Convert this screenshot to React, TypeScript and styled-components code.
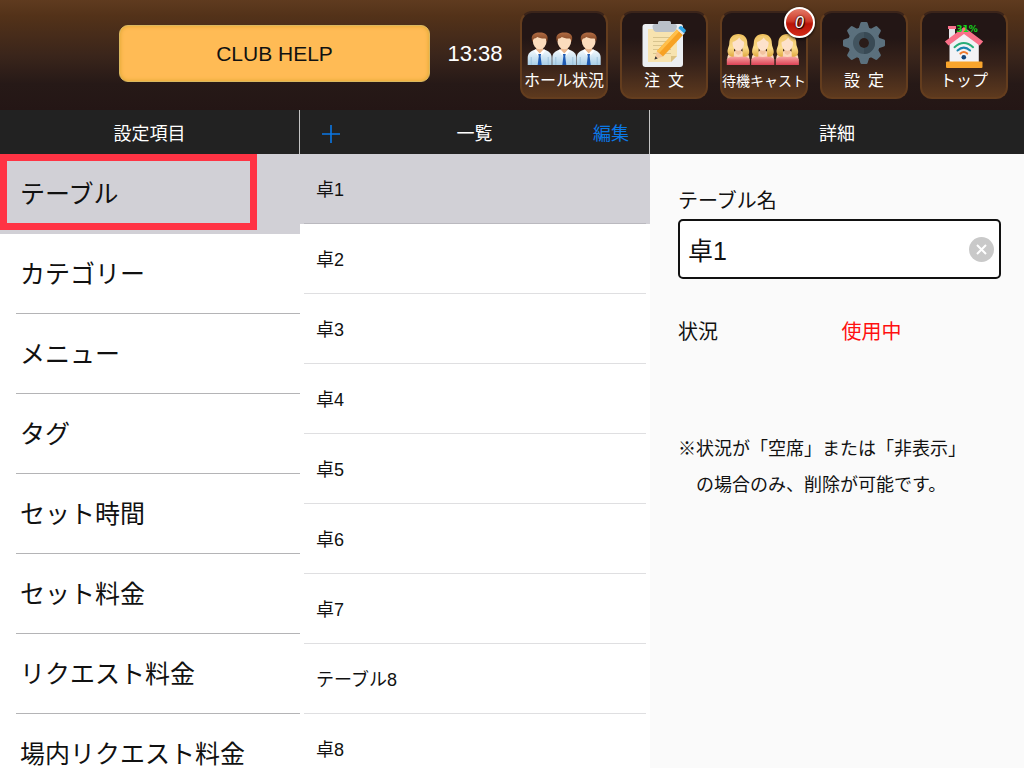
import React, { useState } from "react";
import styled, { createGlobalStyle, css } from "styled-components";

const GlobalStyle = createGlobalStyle`
  *, *::before, *::after { box-sizing: border-box; }
  html, body { margin: 0; }
  body {
    background: #fff;
    color: #111;
    font-family: "Liberation Sans", "Noto Sans CJK JP", sans-serif;
    font-size: 18px;
  }
  button, input { font: inherit; color: inherit; }
  button { margin: 0; padding: 0; border: 0; background: none; cursor: pointer; }
  h1, h2, p, ul, dl, dd { margin: 0; padding: 0; font-weight: 400; }
  ul { list-style: none; }
`;

const Page = styled.div`
  display: flex;
  flex-direction: column;
  height: 100vh;
  overflow: hidden;
`;

const Header = styled.header`
  flex: none;
  display: flex;
  align-items: flex-start;
  gap: 16px;
  height: 110px;
  padding: 11px 16px 0 119px;
  background: linear-gradient(#5f3b1f 0, #533219 16px, #3a251b 56px, #261917 84px, #241615 110px);
`;

const Brand = styled.button`
  flex: 1;
  min-width: 0;
  height: 57px;
  margin-top: 14px;
  border: 1px solid #d9b860;
  border-radius: 9px;
  background: #ffbb55;
  box-shadow: inset 0 0 4px #dba52c;
  color: #111;
  font-size: 21px;
`;

const Clock = styled.time`
  width: 58px;
  margin-top: 14px;
  color: #fff;
  font-size: 22px;
  line-height: 57px;
  text-align: center;
  white-space: nowrap;
`;

const Nav = styled.nav`
  display: flex;
  gap: 12px;
`;

const Tile = styled.button`
  position: relative;
  display: flex;
  flex-direction: column;
  align-items: center;
  width: 88px;
  height: 88px;
  border: 2px solid #643d1e;
  border-top-color: #3b241a;
  border-radius: 12px;
  background: linear-gradient(#231615 30%, #38231a 62%, #5d391e);
  color: #fff;
`;

const TileLabel = styled.span<{ $small?: boolean }>`
  font-size: ${(p) => (p.$small ? 14 : 16)}px;
  line-height: 24px;
  white-space: nowrap;
`;

const TileArt = styled.svg`
  display: block;
  flex: none;
  width: 84px;
  height: 56px;
`;

const Badge = styled.span`
  position: absolute;
  top: -6px;
  right: -9px;
  width: 31px;
  height: 31px;
  border: 2px solid #fff;
  border-radius: 50%;
  background: linear-gradient(#e37a68, #cf3a28 45%, #b81408 55%, #d42c18);
  box-shadow: 0 1px 3px #000;
  color: #fff;
  font-size: 16px;
  font-style: italic;
  line-height: 27px;
  text-align: center;
  text-shadow: 0 0 2px #000, 1px 1px 1px #000;
`;

const Panels = styled.main`
  flex: 1;
  min-height: 0;
  display: grid;
  grid-template-columns: 300px 350px minmax(0, 1fr);
`;

const Panel = styled.section<{ $shaded?: boolean }>`
  min-width: 0;
  min-height: 0;
  display: flex;
  flex-direction: column;
  background: ${(p) => (p.$shaded ? "#fafafa" : "#fff")};
`;

const PanelBar = styled.div<{ $divided?: boolean }>`
  flex: none;
  display: grid;
  grid-template-columns: 1fr auto 1fr;
  align-items: center;
  height: 44px;
  padding: 4px 20px 0;
  background: #222;
  color: #fff;
  border-right: ${(p) => (p.$divided ? "1px solid #c4c4c4" : "0")};
`;

const PanelTitle = styled.h2`
  grid-column: 2;
  font-size: 18px;
  line-height: 40px;
`;

const BarButton = styled.button<{ $end?: boolean }>`
  display: flex;
  align-items: center;
  justify-self: ${(p) => (p.$end ? "end" : "start")};
  height: 40px;
  line-height: 40px;
  color: #0b78e6;
`;

const Scroll = styled.ul`
  flex: 1;
  min-height: 0;
  overflow-y: auto;
  scrollbar-width: none;
`;

const MenuRow = styled.button<{ $active: boolean }>`
  position: relative;
  display: block;
  width: 100%;
  height: 80px;
  padding-left: 20px;
  font-size: 25px;
  line-height: 80px;
  text-align: left;
  white-space: nowrap;
  background: ${(p) => (p.$active ? "#d1d0d6" : "#fff")};

  ${(p) =>
    !p.$active &&
    css`
      &::after {
        content: "";
        position: absolute;
        inset: auto 0 0 16px;
        height: 1px;
        background: #b4b4b6;
      }
    `}
`;

const Highlight = styled.span`
  position: absolute;
  inset: 0 43px 4px 0;
  border: 7px solid #ff3344;
`;

const ListRow = styled.button<{ $active: boolean }>`
  display: block;
  width: 100%;
  height: 70px;
  padding: 0 4px;
  text-align: left;
  background: ${(p) => (p.$active ? "#d1d0d6" : "#fff")};
`;

const ListText = styled.span<{ $active: boolean }>`
  display: block;
  height: 70px;
  padding-left: 12px;
  border-bottom: 1px solid ${(p) => (p.$active ? "#bab9bf" : "#dfdfe1")};
  line-height: 72px;
`;

const Form = styled.form`
  display: flex;
  flex-direction: column;
  padding: 32px 23px 0 28px;
  font-size: 20px;
  line-height: 30px;
`;

const Field = styled.div`
  display: flex;
  align-items: center;
  height: 60px;
  margin-top: 3px;
  padding: 0 5px 0 8px;
  border: 2px solid #111;
  border-radius: 5px;
  background: #fff;
`;

const TextInput = styled.input`
  flex: 1;
  min-width: 0;
  height: 56px;
  padding: 0;
  border: 0;
  outline: 0;
  background: transparent;
  font-size: 25px;
`;

const ClearButton = styled.button`
  flex: none;
  display: flex;
  width: 25px;
  height: 25px;
  border-radius: 50%;
  background: #c9c9c9;
`;

const Status = styled.dl`
  display: grid;
  grid-template-columns: 1fr 1fr;
  column-gap: 4px;
  margin-top: 38px;
  color: #111;

  dd { color: #ff1010; }
`;

const Note = styled.p`
  margin-top: 84px;
  padding-left: 18px;
  text-indent: -18px;
  font-size: 18px;
  line-height: 36px;
  white-space: nowrap;
`;

function HallIcon() {
  return (
    <TileArt viewBox="0 0 84 56" aria-hidden="true">
      <defs>
        <linearGradient id="shirt" x2="0" y2="1">
          <stop stopColor="#f6fbfe" />
          <stop offset="1" stopColor="#a9cfe8" />
        </linearGradient>
        <linearGradient id="brownHair" x2="0" y2="1">
          <stop stopColor="#b06b42" />
          <stop offset="1" stopColor="#7d4322" />
        </linearGradient>
        <g id="man">
          <path d="M-12 52v-7c0-5 3-7 8-8.500h8c5 1.500 8 3.500 8 8.500v7z" fill="url(#shirt)" />
          <path d="M-3.500 33h7v4L0 41l-3.500-4z" fill="#e9b68e" />
          <path d="M-4.500 36 0 40.500 4.500 36l1 2L2 42.500 0 41l-2 1.500L-5.500 38z" fill="#fff" />
          <path d="M-1.500 41h3l-.6 2L2 52h-4l1.100-9z" fill="#1f5bb4" />
          <path d="M-8.500 44v8M8.500 44v8" stroke="#8fb9d6" strokeWidth=".7" />
          <ellipse cy="28.500" rx="6.800" ry="7.800" fill="#fbdcbd" />
          <path d="M-7.300 29C-9.500 22-6 19.500 0 19.500s9.500 2.500 7.300 9.500L6 25.500c-4 .2-7-.5-8.500-1.500-1 1-2.300 1.500-3.500 1.500z" fill="url(#brownHair)" />
        </g>
      </defs>
      <use href="#man" x="17.700" />
      <use href="#man" x="42.300" />
      <use href="#man" x="66.700" />
    </TileArt>
  );
}

function OrderIcon() {
  return (
    <TileArt viewBox="0 0 84 56" aria-hidden="true">
      <rect x="20.500" y="11" width="40.500" height="43" rx="3" fill="#eceff2" />
      <path d="M26 16h29v27l-6 6H26z" fill="#f7e3af" />
      <path d="M49 49v-6h6z" fill="#dcc283" />
      <path d="M31 24.500h18M31 28.500h16M31 32.500h14M31 36.500h18M31 40.500h18" stroke="#d8c48e" strokeWidth="1" />
      <path d="M36 11V9.500Q36 8 37.500 8h10Q49 8 49 9.500V11h3.500Q55 11 55 13.500 54 19 50 19H35q-4 0-4.500-5.500Q30.500 11 33 11z" fill="#b9c0c9" />
      <path d="m32.500 46.500 2.500-8.500 6 5.500z" fill="#f3c79b" />
      <path d="m32.500 46.500.9-3.200 2.300 2.100z" fill="#333" />
      <path d="m35 38 20-21.500 6 5.500-20 21.500z" fill="#f7a224" />
      <path d="m35 38 20-21.500 2.200 2L37.200 40z" fill="#ffc04c" />
      <path d="m55 16.500 1.800-2 6 5.500-1.800 2z" fill="#dfe6ea" />
      <path d="m56.300 15 1.600-1.700q.9-.8 2 0l3.400 3.200q1 1 .2 2L62 20.200z" fill="#2fa6e6" />
    </TileArt>
  );
}

function CastIcon() {
  return (
    <TileArt viewBox="0 0 84 56" aria-hidden="true">
      <defs>
        <linearGradient id="dress" x2="0" y2="1">
          <stop stopColor="#f7a5a2" />
          <stop offset="1" stopColor="#dc4256" />
        </linearGradient>
        <linearGradient id="blondHair" x2="0" y2="1">
          <stop stopColor="#eebf5c" />
          <stop offset=".6" stopColor="#fbdc8a" />
          <stop offset="1" stopColor="#dfa83f" />
        </linearGradient>
        <g id="woman">
          <path d="M-11 52v-7c0-4 4-6 8-7h6c4 1 8 3 8 7v7z" fill="#fbd8bd" />
          <path d="M0 21c-6 0-9 4-9 9 0 4-2.500 6-1.500 10 .8 3 4 4.500 6 4L-4 34h8l.5 10c3 .5 5.800-1 6.300-4 .7-4-1.800-6-1.800-10 0-5-3-9-9-9z" fill="url(#blondHair)" />
          <path d="M-3 34h6v5q0 2-3 3-3-1-3-3z" fill="#f2c3a0" />
          <ellipse cy="30.500" rx="5.800" ry="7.300" fill="#fde2cb" />
          <path d="M-6.200 29c1-5 3-6 6.200-6s5.200 1 6.200 6C4 28 2 26.500 1 24.500-1 27-3.500 28.500-6.200 29z" fill="#f3cc74" />
          <path d="M-11.500 46q4-3.500 11.500-2 7.500-1.500 11.500 2v6h-23z" fill="url(#dress)" />
        </g>
      </defs>
      <use href="#woman" x="16.300" />
      <use href="#woman" x="40.800" />
      <use href="#woman" x="65.300" />
    </TileArt>
  );
}

const TEETH = [0, 45, 90, 135, 180, 225, 270, 315];

function GearIcon() {
  return (
    <TileArt viewBox="0 0 84 56" aria-hidden="true">
      <g transform="translate(42 30)">
        {TEETH.map((angle) => (
          <path key={angle} d="M-5.500-14-3.600-20q.3-1 1.300-1h4.600q1 0 1.300 1L5.500-14z" fill="#5b707d" transform={`rotate(${angle})`} />
        ))}
        <circle r="16" fill="#5b707d" />
        <circle r="8" fill="none" stroke="#42545f" strokeWidth="6" />
        <path d="M0-11A11 11 0 0 1 0 11V5A5 5 0 0 0 0-5z" fill="#394a55" />
        <circle r="5" fill="#2a1c19" />
      </g>
    </TileArt>
  );
}

function HomeIcon() {
  return (
    <TileArt viewBox="0 0 84 56" role="img" aria-label="31%">
      <path d="M27 15h6v12h-6z" fill="#e8e8ec" />
      <path d="M26 13h8v3h-8z" fill="#f7708a" />
      <path d="M27.500 28 42 17l14.800 11v21H27.500z" fill="#f2f2f5" />
      <path d="m42 14 19.200 14.500-3.600 4L42 21 26.500 32.500l-3.600-4z" fill="#fa7089" />
      <rect x="24" y="48.500" width="36.500" height="6.500" rx="1" fill="#f9a52c" />
      <g fill="none" strokeWidth="2" strokeLinecap="round">
        <path d="M32.500 34.200q9.300-8.300 18.600 0" stroke="#28ad78" />
        <path d="M35.500 37.500q6.300-5.800 12.600 0" stroke="#1b84ad" />
        <path d="M38.400 40.600q3.400-3.200 6.800 0" stroke="#ee7a2d" />
      </g>
      <circle cx="41.800" cy="44.300" r="2.300" fill="#12457c" />
      <text x="45" y="19" textAnchor="middle" fill="#14d41c" fontFamily="DejaVu Sans, sans-serif" fontSize="9" fontWeight="700">31%</text>
    </TileArt>
  );
}

const MENU = ["テーブル", "カテゴリー", "メニュー", "タグ", "セット時間", "セット料金", "リクエスト料金", "場内リクエスト料金"];
const TABLES = ["卓1", "卓2", "卓3", "卓4", "卓5", "卓6", "卓7", "テーブル8", "卓8"];

export default function App() {
  const [section, setSection] = useState(0);
  const [table, setTable] = useState(0);
  const [name, setName] = useState(TABLES[0]);

  const selectTable = (index: number) => {
    setTable(index);
    setName(TABLES[index]);
  };

  return (
    <Page>
      <GlobalStyle />
      <Header>
        <Brand type="button">CLUB HELP</Brand>
        <Clock>13:38</Clock>
        <Nav>
          <Tile type="button">
            <HallIcon />
            <TileLabel>ホール状況</TileLabel>
          </Tile>
          <Tile type="button">
            <OrderIcon />
            <TileLabel>注{"\u2002"}文</TileLabel>
          </Tile>
          <Tile type="button">
            <CastIcon />
            <TileLabel $small>待機キャスト</TileLabel>
            <Badge>0</Badge>
          </Tile>
          <Tile type="button">
            <GearIcon />
            <TileLabel>設{"\u2002"}定</TileLabel>
          </Tile>
          <Tile type="button">
            <HomeIcon />
            <TileLabel>トップ</TileLabel>
          </Tile>
        </Nav>
      </Header>

      <Panels>
        <Panel>
          <PanelBar $divided>
            <PanelTitle>設定項目</PanelTitle>
          </PanelBar>
          <Scroll>
            {MENU.map((label, i) => (
              <li key={label}>
                <MenuRow type="button" $active={i === section} onClick={() => setSection(i)}>
                  {label}
                  {i === section && <Highlight />}
                </MenuRow>
              </li>
            ))}
          </Scroll>
        </Panel>

        <Panel>
          <PanelBar $divided>
            <BarButton type="button" aria-label="追加">
              <svg width="22" height="22" viewBox="0 0 22 22" aria-hidden="true">
                <path d="M11 2v18M2 11h18" stroke="currentColor" strokeWidth="1.600" />
              </svg>
            </BarButton>
            <PanelTitle>一覧</PanelTitle>
            <BarButton type="button" $end>編集</BarButton>
          </PanelBar>
          <Scroll>
            {TABLES.map((label, i) => (
              <li key={label}>
                <ListRow type="button" $active={i === table} onClick={() => selectTable(i)}>
                  <ListText $active={i === table}>{label}</ListText>
                </ListRow>
              </li>
            ))}
          </Scroll>
        </Panel>

        <Panel $shaded>
          <PanelBar>
            <PanelTitle>詳細</PanelTitle>
          </PanelBar>
          <Form onSubmit={(e) => e.preventDefault()}>
            <label htmlFor="table-name">テーブル名</label>
            <Field>
              <TextInput id="table-name" type="text" value={name} onChange={(e) => setName(e.target.value)} />
              <ClearButton type="button" aria-label="消去" onClick={() => setName("")}>
                <svg width="25" height="25" viewBox="0 0 25 25" aria-hidden="true">
                  <path d="m8 8 9 9M17 8l-9 9" stroke="#fff" strokeWidth="2" />
                </svg>
              </ClearButton>
            </Field>
            <Status>
              <dt>状況</dt>
              <dd>使用中</dd>
            </Status>
            <Note>
              ※状況が「空席」または「非表示」
              <br />
              の場合のみ、削除が可能です。
            </Note>
          </Form>
        </Panel>
      </Panels>
    </Page>
  );
}
